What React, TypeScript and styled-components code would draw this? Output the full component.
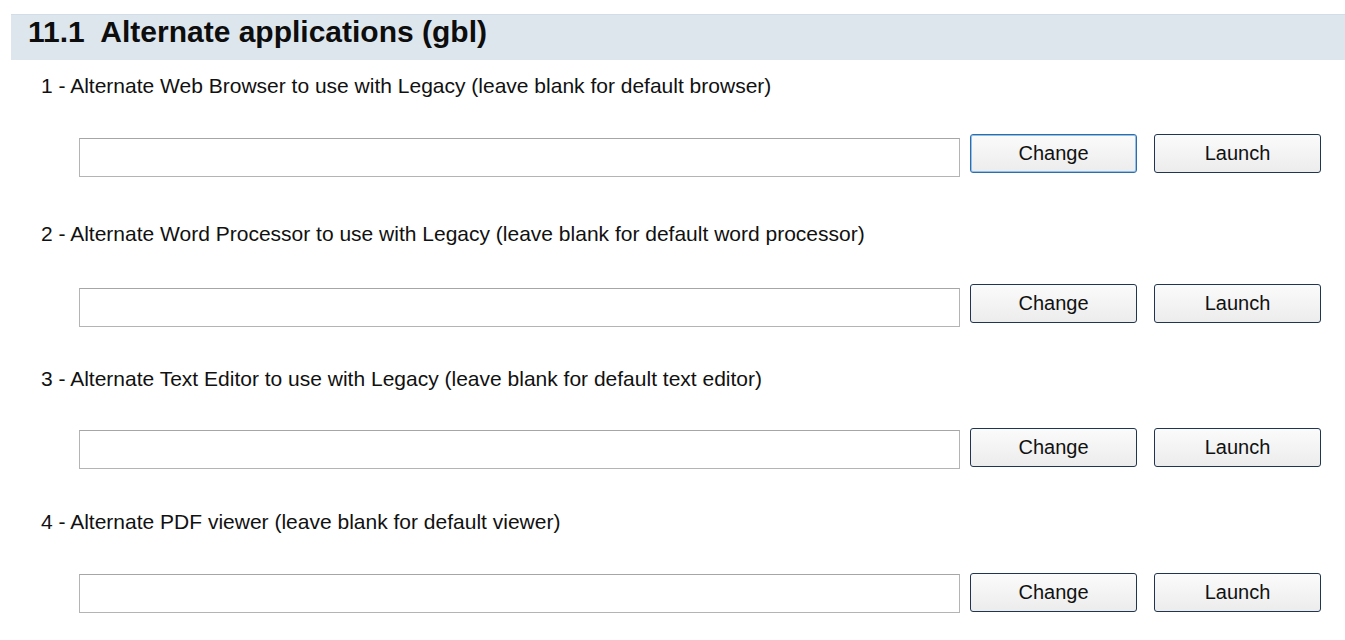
import React from "react";
import styled, { createGlobalStyle, css } from "styled-components";

const Global = createGlobalStyle`
  html, body { margin: 0; padding: 0; background: #ffffff; }
  body { font-family: "Liberation Sans", Arial, sans-serif; color: #111; }
`;

const Page = styled.div`
  width: 1345px;
  height: 640px;
  padding-top: 14px;
  box-sizing: border-box;
  display: flex;
  flex-direction: column;
  overflow: hidden;
`;

const Header = styled.div`
  margin-left: 11px;
  height: 46px;
  background: #dde6ed;
  border-top: 1px solid #d3dde6;
  box-sizing: border-box;
  display: flex;
  align-items: center;
  padding-left: 17px;
  padding-bottom: 11px;
`;

const Title = styled.h1`
  margin: 0;
  font-size: 30px;
  line-height: 30px;
  font-weight: bold;
  color: #0d0d0d;
  white-space: pre;
`;

const Field = styled.div<{ $top: number; $gap: number }>`
  margin-top: ${(p) => p.$top}px;
  display: flex;
  flex-direction: column;
  gap: ${(p) => p.$gap}px;
`;

const Label = styled.div`
  padding-left: 41px;
  height: 24px;
  line-height: 24px;
  font-size: 21px;
  color: #111;
  white-space: nowrap;
`;

const Controls = styled.div`
  display: flex;
  align-items: flex-start;
  height: 39px;
  padding-left: 79px;
`;

const PathInput = styled.input<{ $offset: number }>`
  width: 881px;
  height: 39px;
  margin-top: ${(p) => p.$offset}px;
  box-sizing: border-box;
  border: 1px solid #b4b4b4;
  border-top-color: #a6a6a6;
  background: #fff;
  padding: 0 6px;
  font-family: inherit;
  font-size: 18px;
  outline: none;
`;

const Button = styled.button<{ $focused?: boolean }>`
  width: 167px;
  height: 39px;
  box-sizing: border-box;
  border-radius: 3px;
  border: 1px solid #1f3550;
  background: linear-gradient(#fbfbfb, #ececec);
  font-family: "Liberation Sans", Arial, sans-serif;
  font-size: 20px;
  color: #111;
  padding: 0;
  cursor: pointer;
  ${(p) =>
    p.$focused &&
    css`
      border: 1px solid #2f6ca8;
      box-shadow: inset 0 0 0 1px #8fc1ec;
    `}
`;

const ChangeButton = styled(Button)`
  margin-left: 10px;
`;

const LaunchButton = styled(Button)`
  margin-left: 17px;
`;

const fields = [
  {
    label: "1 - Alternate Web Browser to use with Legacy (leave blank for default browser)",
    top: 14,
    gap: 36,
    offset: 4,
    focused: true,
  },
  {
    label: "2 - Alternate Word Processor to use with Legacy (leave blank for default word processor)",
    top: 49,
    gap: 38,
    offset: 4,
  },
  {
    label: "3 - Alternate Text Editor to use with Legacy (leave blank for default text editor)",
    top: 44,
    gap: 37,
    offset: 2,
  },
  {
    label: "4 - Alternate PDF viewer (leave blank for default viewer)",
    top: 43,
    gap: 39,
    offset: 1,
  },
];

export default function App() {
  return (
    <>
      <Global />
      <Page>
        <Header>
          <Title>{"11.1  Alternate applications (gbl)"}</Title>
        </Header>
        {fields.map((f, i) => (
          <Field key={i} $top={f.top} $gap={f.gap}>
            <Label>{f.label}</Label>
            <Controls>
              <PathInput $offset={f.offset} type="text" defaultValue="" />
              <ChangeButton $focused={f.focused}>Change</ChangeButton>
              <LaunchButton>Launch</LaunchButton>
            </Controls>
          </Field>
        ))}
      </Page>
    </>
  );
}
